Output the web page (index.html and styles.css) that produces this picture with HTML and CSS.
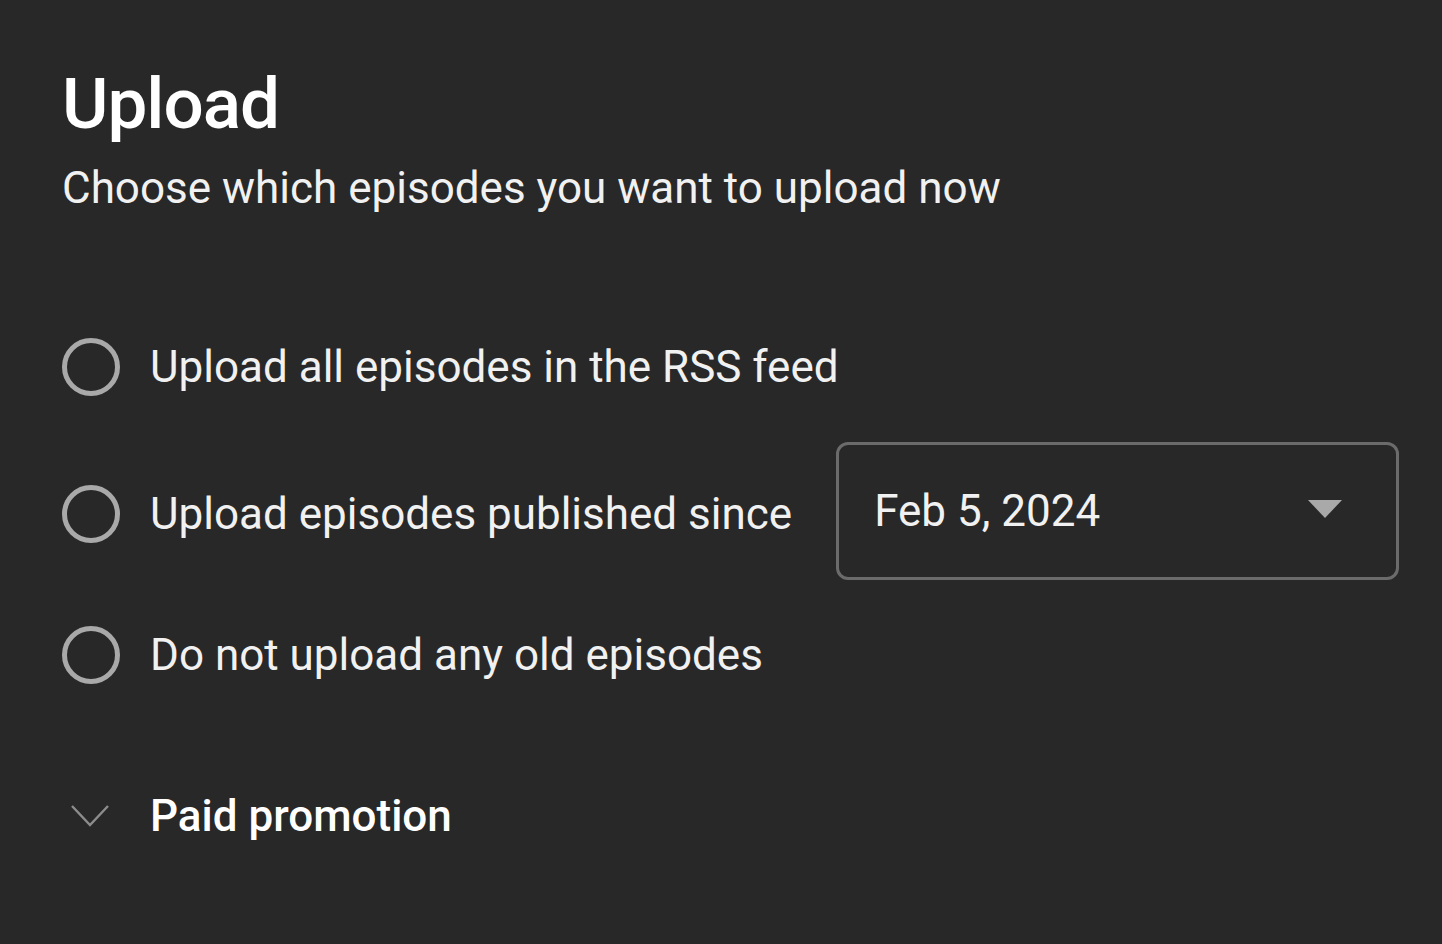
FILE: index.html
```html
<!DOCTYPE html>
<html lang="en">
<head>
    <meta charset="UTF-8">
    <title>Upload</title>
    <link rel="stylesheet" href="styles.css">
</head>
<body>
    <div class="dialog">
        <h1 class="title">Upload</h1>
        <div class="subtitle">Choose which episodes you want to upload now</div>

        <div class="options">
            <label class="option">
                <span class="radio"></span>
                <span class="option-label">Upload all episodes in the RSS feed</span>
            </label>
            <label class="option option-date">
                <span class="radio"></span>
                <span class="option-label">Upload episodes published since</span>
                <div class="select">
                    <span class="select-value">Feb 5, 2024</span>
                    <span class="select-arrow"></span>
                </div>
            </label>
            <label class="option">
                <span class="radio"></span>
                <span class="option-label">Do not upload any old episodes</span>
            </label>
        </div>

        <div class="section-toggle">
            <svg class="chevron" width="40" height="26" viewBox="0 0 40 26">
                <polyline points="2,3 20,22 38,3" fill="none" stroke="#8c8c8c" stroke-width="2.4"/>
            </svg>
            <span class="section-label">Paid promotion</span>
        </div>
    </div>
</body>
</html>
```

FILE: styles.css
```css
body {
    margin: 0;
    background-color: #282828;
    font-family: Roboto, "Noto Sans", sans-serif;
    color: #f1f1f1;
}
.dialog {
    padding: 67px 0 0 62px;
}
.title {
    margin: 0;
    font-size: 71px;
    font-weight: 500;
    letter-spacing: -1px;
    line-height: 74px;
    color: #ffffff;
}
.subtitle {
    margin-top: 25px;
    font-size: 44px;
    line-height: 1;
}
.options {
    margin-top: 117px;
    display: flex;
    flex-direction: column;
    gap: 35px;
}
.option {
    display: flex;
    align-items: center;
    height: 80px;
    cursor: pointer;
}
.option-date {
    height: 138px;
}
.option-date .radio,
.option-date .option-label {
    margin-top: 6px;
}
.radio {
    width: 48px;
    height: 48px;
    border: 5px solid #a9a9a9;
    border-radius: 50%;
    flex-shrink: 0;
    margin-right: 30px;
}
.option-label {
    font-size: 44px;
    line-height: 1;
    white-space: nowrap;
}
.select {
    margin-left: 44px;
    width: 563px;
    height: 138px;
    flex-shrink: 0;
    box-sizing: border-box;
    border: 3px solid #6b6b6b;
    border-radius: 12px;
    display: flex;
    align-items: center;
    justify-content: space-between;
    padding: 0 54px 0 35px;
}
.select-value {
    font-size: 44px;
    line-height: 1;
}
.select-arrow {
    width: 0;
    height: 0;
    border-left: 17px solid transparent;
    border-right: 17px solid transparent;
    border-top: 18px solid #a9a9a9;
    margin-top: -4px;
}
.section-toggle {
    margin-top: 81px;
    display: flex;
    align-items: center;
    height: 80px;
}
.chevron {
    margin: 0 40px 0 8px;
}
.section-label {
    font-size: 44px;
    font-weight: 500;
    line-height: 1;
    color: #ffffff;
}
```
